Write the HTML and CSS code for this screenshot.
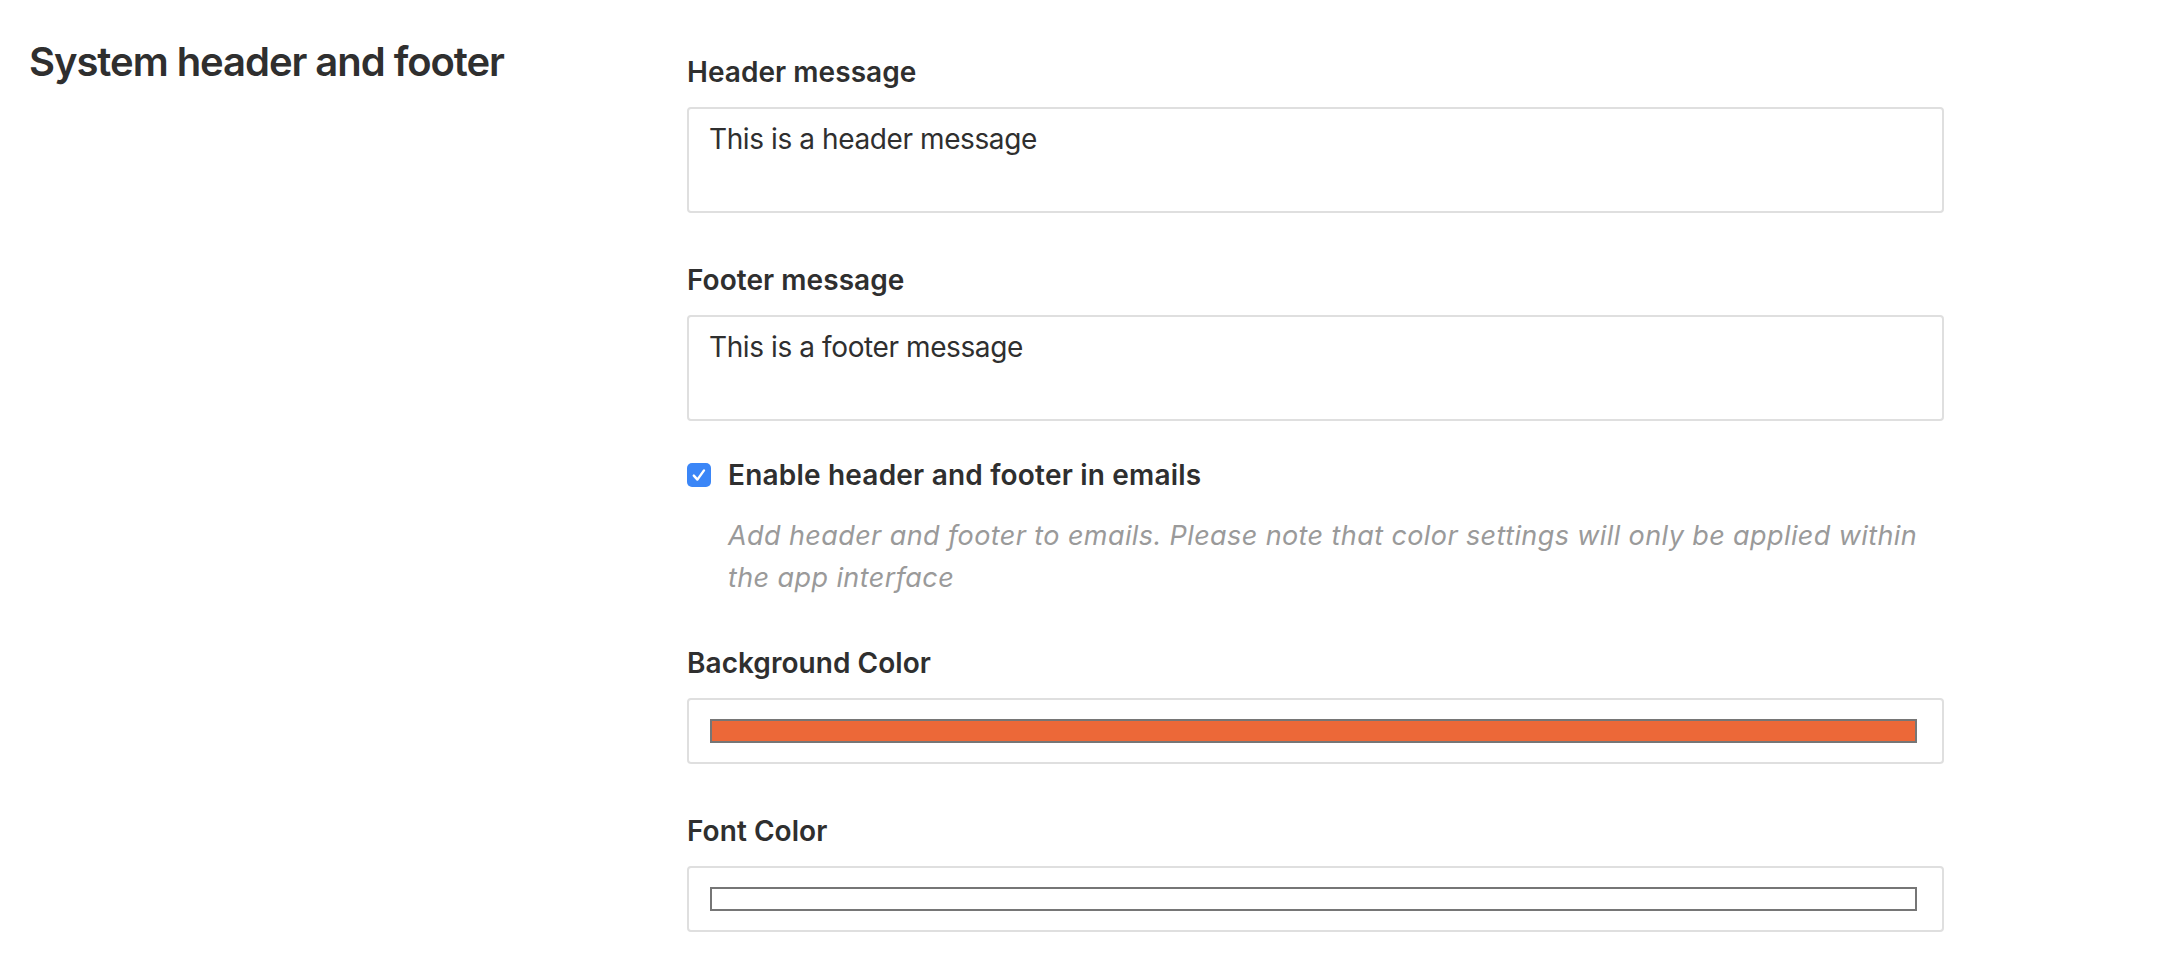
FILE: index.html
```html
<!DOCTYPE html>
<html lang="en">
<head>
<meta charset="utf-8">
<title>System header and footer</title>
<link rel="stylesheet" href="styles.css">
</head>
<body>
<main class="page">
  <h2 class="section-title">System header and footer</h2>
  <form class="form">
    <div class="field">
      <label class="field-label" for="header-msg">Header message</label>
      <textarea class="text-area" id="header-msg">This is a header message</textarea>
    </div>
    <div class="field">
      <label class="field-label" for="footer-msg">Footer message</label>
      <textarea class="text-area" id="footer-msg">This is a footer message</textarea>
    </div>
    <div class="check-field">
      <span class="checkbox" role="checkbox" aria-checked="true">
        <svg viewBox="0 0 24 24" width="24" height="24"><path d="M6.8 12.6 L10.4 16.6 L17 7.4" fill="none" stroke="#fff" stroke-width="2.4" stroke-linecap="round" stroke-linejoin="round"/></svg>
      </span>
      <div class="check-body">
        <span class="check-label">Enable header and footer in emails</span>
        <p class="hint">Add header and footer to emails. Please note that color settings will only be applied within the app interface</p>
      </div>
    </div>
    <div class="field">
      <label class="field-label">Background Color</label>
      <div class="color-box"><span class="swatch swatch-orange"></span></div>
    </div>
    <div class="field">
      <label class="field-label">Font Color</label>
      <div class="color-box"><span class="swatch swatch-white"></span></div>
    </div>
  </form>
</main>
</body>
</html>
```
FILE: styles.css
```css
html, body {
  margin: 0;
  padding: 0;
  background: #ffffff;
}

body {
  font-family: Inter, "Noto Sans", "Liberation Sans", sans-serif;
  color: #2f2f2f;
}

.page {
  display: flex;
  align-items: flex-start;
  padding: 38px 0 0 29px;
}

.section-title {
  width: 658px;
  flex: none;
  margin: 0;
  font-size: 40px;
  line-height: 48px;
  font-weight: 600;
  letter-spacing: -1.05px;
  color: #2f2f2f;
}

.form {
  width: 1257px;
  flex: none;
  display: flex;
  flex-direction: column;
  padding-top: 17px;
}

.field {
  display: flex;
  flex-direction: column;
  gap: 18px;
  margin-bottom: 50px;
}

.field-label {
  font-size: 28px;
  line-height: 34px;
  font-weight: 600;
  letter-spacing: 0.05px;
  color: #2f2f2f;
}

.text-area {
  box-sizing: border-box;
  display: block;
  width: 100%;
  height: 106px;
  margin: 0;
  padding: 9px 20px;
  border: 2px solid #dfdfdf;
  border-radius: 4px;
  resize: none;
  font-family: Inter, "Noto Sans", "Liberation Sans", sans-serif;
  font-size: 28px;
  line-height: 42px;
  letter-spacing: -0.4px;
  color: #2f2f2f;
  background: #fff;
  outline: none;
}

.check-field {
  display: flex;
  align-items: flex-start;
  gap: 17px;
  margin-top: -13px;
  margin-bottom: 47px;
}

.checkbox {
  flex: none;
  width: 24px;
  height: 24px;
  margin-top: 5px;
  border-radius: 5px;
  background: #3b86f7;
  display: flex;
  align-items: center;
  justify-content: center;
}

.checkbox svg {
  display: block;
}

.check-body {
  display: flex;
  flex-direction: column;
  gap: 23px;
}

.check-label {
  font-size: 28px;
  line-height: 34px;
  font-weight: 600;
  letter-spacing: 0.2px;
  color: #2f2f2f;
}

.hint {
  margin: 0;
  font-size: 27px;
  line-height: 42px;
  letter-spacing: 0.4px;
  font-style: italic;
  color: #9a9a9a;
}

.color-box {
  box-sizing: border-box;
  height: 66px;
  padding: 19px 25px 19px 21px;
  border: 2px solid #dfdfdf;
  border-radius: 4px;
  display: flex;
}

.swatch {
  box-sizing: border-box;
  display: block;
  flex: 1;
  height: 24px;
  border: 2px solid #767676;
}

.swatch-orange {
  background: #ec6838;
}

.swatch-white {
  background: #ffffff;
}
```
